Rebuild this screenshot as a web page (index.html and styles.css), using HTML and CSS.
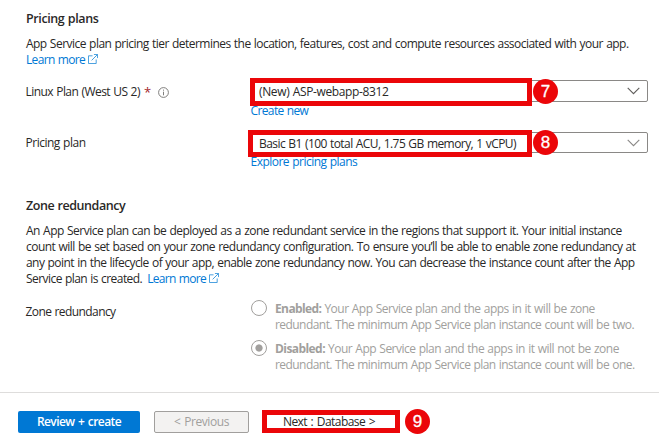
FILE: index.html
```
<!DOCTYPE html>
<html lang="en">
<head>
<meta charset="utf-8">
<title>Create Web App</title>
<link rel="stylesheet" href="styles.css">
</head>
<body>
<main class="content">
  <section class="plans">
    <h2 class="t-plans">Pricing plans</h2>
    <p class="copy"><span class="t-intro">App Service plan pricing tier determines the location, features, cost and compute resources associated with your app.</span><br><a class="link t-learn" href="#">Learn more</a><svg class="external" viewBox="0 0 11 11"><path d="M5 2H.5v8.500H9V6M6.500.500h4v4M10.500.500 4 7"/></svg></p>
    <div class="row row-linux">
      <label class="label"><span class="t-linux">Linux Plan (West US 2)</span><span class="required">*</span><svg class="info" viewBox="0 0 11 11"><circle cx="5.500" cy="5.500" r="4.900"/><path d="M5.500 4.700v3.600M5.500 2.600v1.100"/></svg></label>
      <div class="field">
        <div class="select"><span class="t-new">(New) ASP-webapp-8312</span><svg class="chevron" viewBox="0 0 13 8"><path d="m.7.900 5.800 5.800L12.300.900"/></svg></div>
        <div class="mark mark-linux"></div><div class="step step-field">7</div>
        <a class="link t-create" href="#">Create new</a>
      </div>
    </div>
    <div class="row row-pricing">
      <label class="label t-plan">Pricing plan</label>
      <div class="field">
        <div class="select select-pricing"><span class="t-basic">Basic B1 (100 total ACU, 1.75 GB memory, 1 vCPU)</span><svg class="chevron soft" viewBox="0 0 13 8"><path d="m.7.900 5.800 5.800L12.300.900"/></svg></div>
        <div class="mark mark-pricing"></div><div class="step step-field">8</div>
        <a class="link t-explore" href="#">Explore pricing plans</a>
      </div>
    </div>
  </section>
  <section class="zone">
    <h2 class="t-zone">Zone redundancy</h2>
    <p class="copy"><span class="t-z1">An App Service plan can be deployed as a zone redundant service in the regions that support it. Your initial instance</span><br><span class="t-z2">count will be set based on your zone redundancy configuration. To ensure you’ll be able to enable zone redundancy at</span><br><span class="t-z3">any point in the lifecycle of your app, enable zone redundancy now. You can decrease the instance count after the App</span><br><span class="t-z4">Service plan is created.</span><a class="link t-learn learn-zone" href="#">Learn more</a><svg class="external" viewBox="0 0 11 11"><path d="M5 2H.5v8.500H9V6M6.500.500h4v4M10.500.500 4 7"/></svg></p>
    <div class="row row-zone">
      <span class="label t-zlabel">Zone redundancy</span>
      <div class="options">
        <div class="option"><i class="radio"></i><p><b class="t-enabled">Enabled:</b><span class="t-o1">Your App Service plan and the apps in it will be zone</span><br><span class="t-o2">redundant. The minimum App Service plan instance count will be two.</span></p></div>
        <div class="option"><i class="radio checked"></i><p><b class="t-disabled">Disabled:</b><span class="t-o3">Your App Service plan and the apps in it will not be zone</span><br><span class="t-o2">redundant. The minimum App Service plan instance count will be one.</span></p></div>
      </div>
    </div>
  </section>
</main>
<footer class="footer">
  <button class="button primary">Review + create</button>
  <button class="button previous">&lt; Previous</button>
  <button class="button next">Next : Database &gt;</button>
  <div class="step">9</div>
</footer>
</body>
</html>
```
FILE: styles.css
```
* { box-sizing: border-box; }
body {
  margin: 0;
  height: 442px;
  overflow: hidden;
  background: #fff;
  color: #292827;
  font: 12px/16px "Open Sans", "Noto Sans", sans-serif;
  white-space: nowrap;
  word-spacing: .6px;
}
h2, p { margin: 0; }
h2 { font-size: 12.5px; line-height: 16px; font-weight: 600; }
svg { fill: none; stroke: currentColor; }
.content { height: 392px; padding: 11px 11px 0 26px; }
.copy { margin-top: 9px; }
.link { color: #0078d4; text-decoration: none; }
.external { width: 10px; height: 10px; margin-left: 3px; color: #3595dc; vertical-align: 0; }
.plans { height: 187px; }
.row { display: grid; grid-template-columns: 225px 1fr; }
.row-linux { margin-top: 12px; }
.row-pricing { margin-top: 13px; }
.label { display: flex; align-items: center; height: 16px; margin-top: 4px; margin-left: -.5px; }
.required { margin-left: 4px; color: #a4262c; font-size: 13px; }
.info { width: 11px; height: 11px; margin-left: 7px; color: #72706e; stroke-width: .9; }
.field { position: relative; }
.select {
  display: flex;
  align-items: center;
  justify-content: space-between;
  height: 22px;
  padding: 0 7px;
  border: 1px solid #8a8886;
  border-radius: 2px;
}
.select span { padding-top: 2px; }
.select-pricing { height: 21px; }
.row-pricing .label { margin-top: 3px; }
.chevron { width: 13px; height: 8px; color: #605e5c; stroke-width: 1.1; }
.soft { color: #8a8886; }
.field .link { display: block; margin: 1px 0 0 -.5px; }
.mark { position: absolute; border: 5px solid #eb0609; }
.mark-linux { left: -1px; top: -2px; width: 282px; height: 28px; }
.mark-pricing { left: -3px; top: -2px; width: 284px; height: 27px; }
.step {
  width: 25px;
  height: 25px;
  border-radius: 50%;
  background: #eb0609;
  color: #fff;
  font: 17px/25px "Liberation Sans", sans-serif;
  -webkit-text-stroke: .3px #fff;
  text-align: center;
}
.step-field { position: absolute; left: 282px; top: -1px; }
.row-pricing .step-field { top: -2px; }
.row-zone { margin-top: 13px; }
.options { display: grid; gap: 7px; color: #a19f9d; }
.option { display: flex; gap: 8px; }
.option p { padding-top: 1px; }
.radio { width: 16px; height: 16px; border: 1px solid #a19f9d; border-radius: 50%; }
.checked { background: radial-gradient(circle, #a19f9d 3.200px, transparent 4px); }
.footer { display: flex; height: 50px; padding: 18px 18px 0; border-top: 1px solid #dedddc; }
.button {
  width: 122px;
  height: 22px;
  padding: 0;
  border: 0;
  border-radius: 2px;
  font: 600 12px/16px "Open Sans", "Noto Sans", sans-serif;
  word-spacing: 1px;
}
.primary { background: #0078d4; color: #fff; letter-spacing: -.58px; }
.previous { width: 95px; margin-left: 14px; border: 1px solid #a19f9d; background: #f3f2f1; color: #a19f9d; font-weight: 400; letter-spacing: -.42px; }
.next { width: 138px; height: 23px; margin: -1px 0 0 13px; padding: 1px 4px 0 0; border: 5px solid #eb0609; border-radius: 0; background: #fff; color: #292827; font-weight: 500; line-height: 12px; letter-spacing: -.55px; }
.footer .step { margin: -2px 0 0 5px; }
.t-plans { letter-spacing: -.39px; }
.t-intro { letter-spacing: -.53px; }
.t-learn { letter-spacing: -.66px; }
.learn-zone { margin-left: 5px; }
.t-linux { letter-spacing: -.55px; }
.t-new { letter-spacing: -.36px; }
.t-create { letter-spacing: -.62px; }
.t-plan { letter-spacing: -.49px; }
.t-basic { letter-spacing: -.56px; }
.t-explore { letter-spacing: -.52px; }
.t-zone { letter-spacing: -.45px; }
.t-z1 { letter-spacing: -.52px; }
.t-z2 { letter-spacing: -.527px; }
.t-z3 { letter-spacing: -.547px; }
.t-z4 { letter-spacing: -.56px; }
.t-zlabel { letter-spacing: -.58px; }
.t-enabled { margin-right: 3px; letter-spacing: -.6px; }
.t-disabled { margin-right: 3px; letter-spacing: -.57px; }
.t-o1, .t-o3 { letter-spacing: -.51px; }
.t-o2 { letter-spacing: -.555px; }
```
